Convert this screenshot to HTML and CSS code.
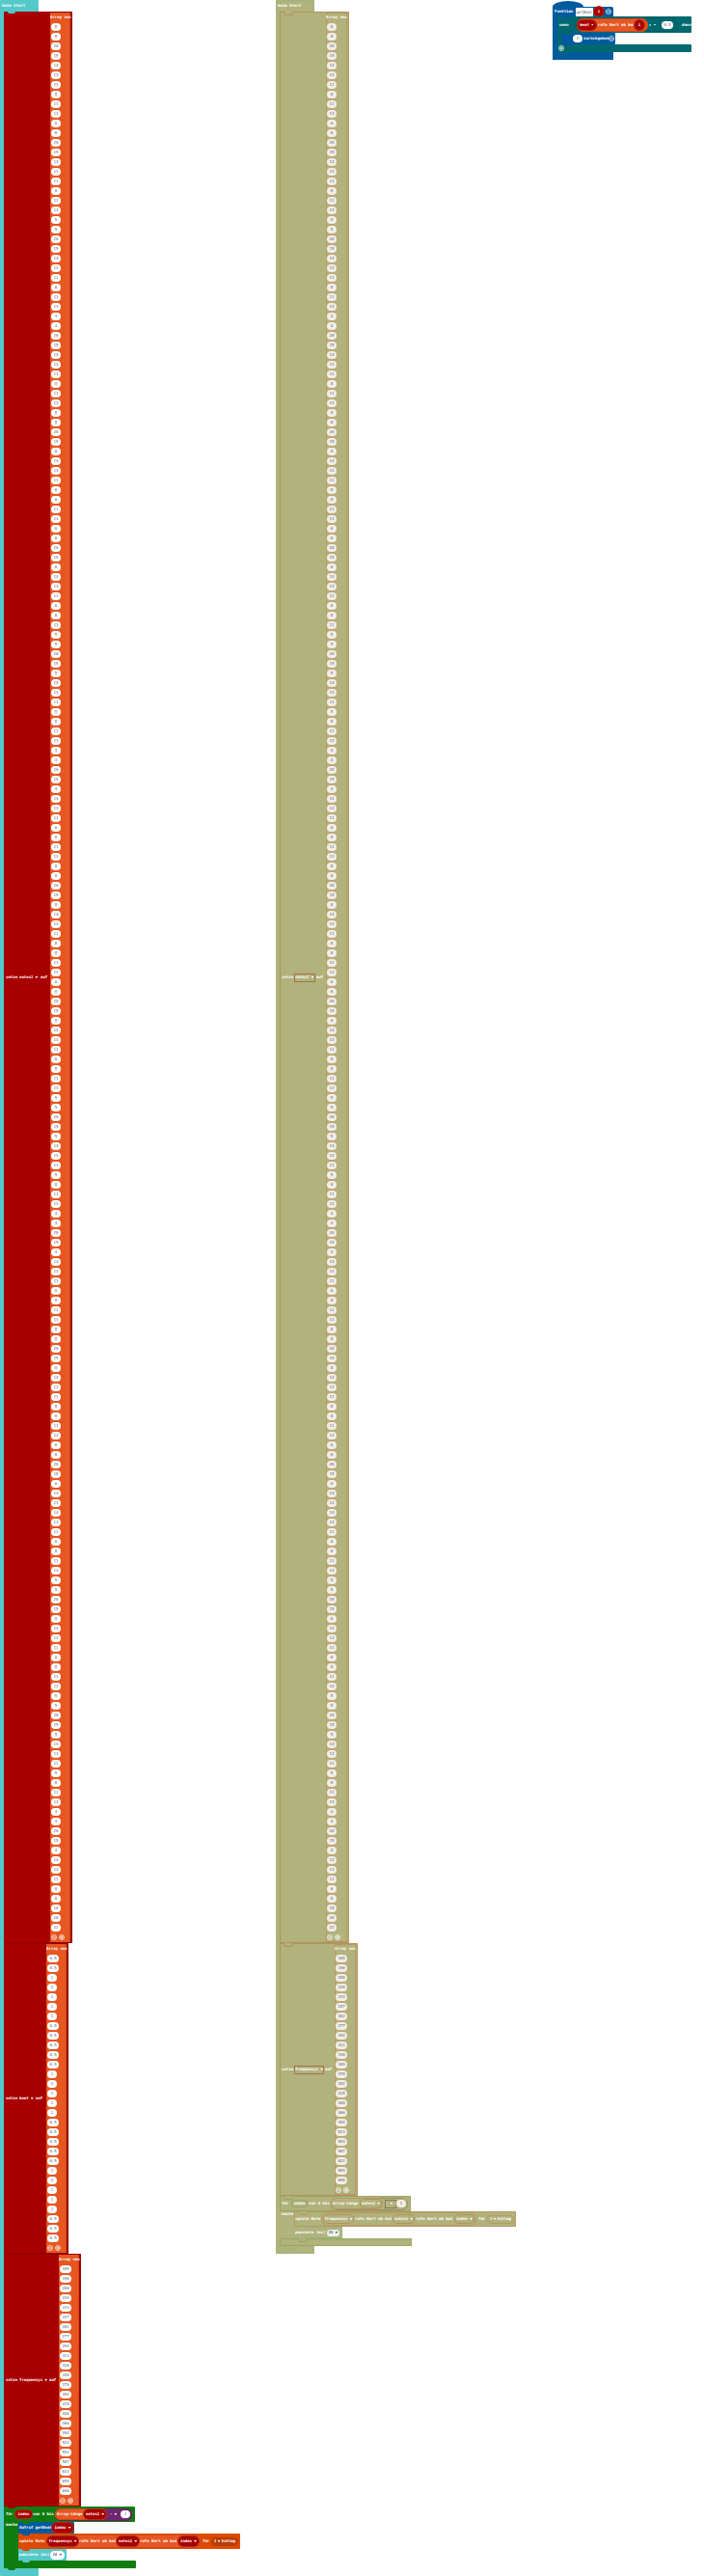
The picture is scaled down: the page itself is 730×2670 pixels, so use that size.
FILE: index.html
```html
<!DOCTYPE html>
<html lang="de">
<head>
<meta charset="utf-8">
<title>Blöcke</title>
<link rel="stylesheet" href="styles.css">
</head>
<body>
<svg class="defs" aria-hidden="true">
  <symbol id="minus" viewBox="0 0 12 12"><circle cx="6" cy="6" r="5" fill="none" stroke="currentColor" stroke-width="1.5"/><path d="M3 6h6" stroke="currentColor" stroke-width="2"/></symbol>
  <symbol id="plus" viewBox="0 0 12 12"><circle cx="6" cy="6" r="5" fill="none" stroke="currentColor" stroke-width="1.5"/><path d="M3 6h6M6 3v6" stroke="currentColor" stroke-width="2"/></symbol>
</svg>
<main class="workspace">

  <section class="stack">
    <h2 class="hat teal">beim Start</h2>
    <div class="body teal">
      <div class="block set notes red after-teal">
        <span>setze</span>
        <label class="drop flat"><select aria-label="Variable"><option>notes1</option></select></label>
        <span>auf</span>
        <div class="array orange" data-values="notes"></div>
      </div>
      <div class="block set beat red">
        <span>setze</span>
        <label class="drop flat"><select aria-label="Variable"><option>beat</option></select></label>
        <span>auf</span>
        <div class="array orange" data-values="beat"></div>
      </div>
      <div class="block set freq red">
        <span>setze</span>
        <label class="drop flat"><select aria-label="Variable"><option>frequensys</option></select></label>
        <span>auf</span>
        <div class="array orange" data-values="freq"></div>
      </div>
      <div class="loop green">
        <div class="block loop-head green after-red">
          <span>für</span><span class="pill red">index</span><span>von 0 bis</span>
          <div class="oval minus purple">
            <div class="oval length orange"><span>Array-Länge</span><label class="drop red"><select aria-label="Array"><option>notes1</option></select></label></div>
            <label class="drop flat"><select aria-label="Rechenart"><option>-</option></select></label>
            <input class="value" value="1" aria-label="Zahl">
          </div>
        </div>
        <div class="loop-body">
          <span class="do">mache</span>
          <div class="inner">
            <div class="block call blue after-green"><span>Aufruf getBeat</span><label class="drop red"><select aria-label="Argument"><option>index</option></select></label></div>
            <div class="block play rust after-blue">
              <span>spiele Note</span>
              <div class="oval lookup orange">
                <label class="drop red"><select aria-label="Liste"><option>frequensys</option></select></label>
                <span>rufe Wert ab bei</span>
                <label class="drop red"><select aria-label="Liste"><option>notes1</option></select></label>
                <span>rufe Wert ab bei</span>
                <label class="drop red"><select aria-label="Index"><option>index</option></select></label>
              </div>
              <span>für</span>
              <label class="drop beats"><select aria-label="Dauer"><option>1</option></select><span>Schlag</span></label>
            </div>
            <div class="block pause teal after-rust"><span>pausiere (ms)</span><label class="drop light"><select aria-label="Dauer in ms"><option>20</option></select></label></div>
          </div>
        </div>
        <div class="block loop-foot green after-teal-inner"></div>
      </div>
    </div>
    <div class="foot teal after-green"></div>
  </section>

  <section class="stack off">
    <h2 class="hat teal">beim Start</h2>
    <div class="body teal">
      <div class="block set notes red after-teal">
        <span>setze</span>
        <label class="drop flat"><select aria-label="Variable"><option>notes1</option></select></label>
        <span>auf</span>
        <div class="array orange" data-values="notes"></div>
      </div>
      <div class="block set freq red after-red">
        <span>setze</span>
        <label class="drop flat"><select aria-label="Variable"><option>frequensys</option></select></label>
        <span>auf</span>
        <div class="array orange" data-values="freq"></div>
      </div>
      <div class="loop green">
        <div class="block loop-head green after-red">
          <span>für</span><span class="pill green">index</span><span>von 0 bis</span>
          <div class="oval minus purple">
            <div class="oval length orange"><span>Array-Länge</span><label class="drop red"><select aria-label="Array"><option>notes1</option></select></label></div>
            <label class="drop flat"><select aria-label="Rechenart"><option>-</option></select></label>
            <input class="value" value="1" aria-label="Zahl">
          </div>
        </div>
        <div class="loop-body">
          <span class="do">mache</span>
          <div class="inner">
            <div class="block play rust after-green">
              <span>spiele Note</span>
              <div class="oval lookup orange">
                <label class="drop red"><select aria-label="Liste"><option>frequensys</option></select></label>
                <span>rufe Wert ab bei</span>
                <label class="drop red"><select aria-label="Liste"><option>notes1</option></select></label>
                <span>rufe Wert ab bei</span>
                <label class="drop red"><select aria-label="Index"><option>index</option></select></label>
              </div>
              <span>für</span>
              <label class="drop beats"><select aria-label="Dauer"><option>1</option></select><span>Schlag</span></label>
            </div>
            <div class="block pause teal after-rust"><span>pausiere (ms)</span><label class="drop light"><select aria-label="Dauer in ms"><option>20</option></select></label></div>
          </div>
        </div>
        <div class="block loop-foot green after-teal-inner"></div>
      </div>
    </div>
    <div class="foot teal after-green"></div>
  </section>

  <section class="stack func">
    <div class="cap blue"></div>
    <div class="block func-head blue">
      <span>Funktion</span><input class="name" value="getBeat" aria-label="Funktionsname"><span class="pill red">i</span>
      <button class="icon" aria-label="Einklappen"><svg><use href="#minus"/></svg></button>
    </div>
    <div class="body blue">
      <div class="block if-head pine after-blue">
        <span>wenn</span>
        <div class="oval compare pine">
          <div class="oval pick orange">
            <label class="drop red"><select aria-label="Liste"><option>beat</option></select></label>
            <span>rufe Wert ab bei</span><span class="pill red">i</span>
          </div>
          <label class="drop flat"><select aria-label="Vergleich"><option>=</option></select></label>
          <input class="value wide" value="0.5" aria-label="Zahl">
        </div>
        <span>dann</span>
      </div>
      <div class="if-body pine">
        <div class="block return blue after-pine">
          <input class="value" value="2" aria-label="Rückgabewert"><span>zurückgeben</span>
          <button class="icon" aria-label="Wert entfernen"><svg><use href="#minus"/></svg></button>
        </div>
      </div>
      <div class="block if-foot pine after-blue-inner">
        <button class="icon" aria-label="Zweig hinzufügen"><svg><use href="#plus"/></svg></button>
      </div>
    </div>
    <div class="func-foot blue after-pine"></div>
  </section>

</main>
<script src="arrays.js"></script>
</body>
</html>
```

FILE: styles.css
```css
* { box-sizing: border-box; }

body {
  margin: 0;
  background: #fff;
  color: #fff;
  font: bold 4px/6px "DejaVu Sans Mono", monospace;
}

.defs { position: absolute; width: 0; height: 0; }

.workspace {
  display: grid;
  grid-template-columns: 286fr 287fr 157fr;
  align-items: start;
}

.stack { min-width: 0; white-space: nowrap; }

/* block colours */
.teal { --c: #54c9c9; --line: #4dbcbc; }
.red { --c: #a80000; --line: #960000; }
.orange { --c: #e65722; --line: #cf4a1a; }
.green { --c: #107c10; --line: #0e720e; }
.purple { --c: #712672; --line: #64215f; }
.blue { --c: #005a9e; --line: #00528f; }
.rust { --c: #dd4900; --line: #cc4300; }
.pine { --c: #006970; --line: #005c62; }

.after-teal, .after-teal-inner { --prev: #54c9c9; }
.after-red { --prev: #a80000; }
.after-green { --prev: #107c10; }
.after-blue, .after-blue-inner { --prev: #005a9e; }
.after-rust { --prev: #dd4900; }
.after-pine { --prev: #006970; }

.off .teal { --c: #b1b27c; --line: #9db481; }
.off .red { --c: #b1b27c; --line: #b3925f; }
.off .orange { --c: #b1b27c; --line: #b89a62; }
.off .green { --c: #b1b27c; --line: #94a862; }
.off .purple { --c: #b1b27c; --line: #9c8d70; }
.off .rust { --c: #b1b27c; --line: #b89a62; }

/* frame of a stack */
.hat {
  width: 40px;
  height: 12px;
  margin: 0;
  padding: 3px 2px;
  font: inherit;
  background: var(--c);
  border-radius: 1px 1px 0 0;
}
.body { width: max-content; border-left: 4px solid var(--c); }
.foot {
  position: relative;
  width: 40px;
  height: 8px;
  background: var(--c);
  border-radius: 0 0 1px 1px;
}
.off .hat { box-shadow: inset 0 1px var(--line), inset 1px 0 var(--line), inset -1px 0 var(--line); }
.off .foot { box-shadow: inset 1px 0 var(--line), inset 0 -1px var(--line), inset -1px 0 var(--line); }

.block {
  position: relative;
  display: grid;
  align-items: center;
  width: max-content;
  background: var(--c);
  border-radius: 0 1px 1px 0;
}
.block.set, .off .block { box-shadow: inset 0 0 0 1px var(--line); }

/* connector between two stacked blocks */
.block::before, .foot::before, .func-foot::before {
  content: "";
  position: absolute;
  top: 0;
  left: 4px;
  width: 8px;
  height: 2px;
  background: var(--prev, transparent);
  border-radius: 0 0 3px 3px;
}
.foot::before, .func-foot::before { left: 8px; }
.loop-foot::before { left: 19px; }
.if-foot::before { left: 8px; }
.off .block::before, .off .foot::before {
  height: 3px;
  background: #b1b27c;
  border: solid var(--line);
  border-width: 0 1px 1px;
}

/* "setze … auf" blocks */
.set { padding: 1px 2px 1px 2px; }
.notes { grid-template-columns: 13px 22px 11px 21px; }
.beat { grid-template-columns: 13px 17px 12px 21px; }
.freq { grid-template-columns: 13px 31px 11px 21px; }
.off .notes { grid-template-columns: 13px 22px 11px 22px; }
.off .freq { grid-template-columns: 13px 31px 11px 22px; }
.set > span:nth-of-type(2) { padding-left: 1px; }

.array { background: var(--c); box-shadow: inset -1px 0 var(--line); }
.off .array { box-shadow: inset 0 0 0 1px var(--line); }
.array-title { height: 10px; line-height: 10px; }
.array ol { margin: 0; padding: 0; list-style: none; }
.array li, .array-tools { display: flex; align-items: center; height: 10px; padding-left: 1px; }
.array-tools { gap: 2px; }

.value, .name {
  width: 10px;
  height: 8px;
  padding: 0;
  border: 0;
  border-radius: 4px;
  background: #fff;
  color: #575e75;
  font: 4px/8px "DejaVu Sans Mono", monospace;
  text-align: center;
}
.value.wide { width: 12px; }
.name { width: 18px; height: 9px; border-radius: 0; }
.off .value { background: #f0efe4; box-shadow: 0 0 0 1px #c0a77a; }

.icon {
  width: 6px;
  height: 6px;
  padding: 0;
  border: 0;
  background: none;
  color: #fff;
}
.icon svg { display: block; width: 6px; height: 6px; }

/* drop-downs and variable pills */
.drop, .pill {
  display: flex;
  align-items: center;
  justify-content: center;
  gap: 2px;
  height: 10px;
  border-radius: 5px;
  background: var(--c);
}
.drop::after {
  content: "";
  flex: none;
  order: 1;
  width: 3px;
  height: 2px;
  background: currentColor;
  clip-path: polygon(0 0, 100% 0, 50% 100%);
}
.drop > span { order: 2; }
.drop select {
  appearance: none;
  field-sizing: content;
  margin: 0;
  padding: 0;
  border: 0;
  background: none;
  color: inherit;
  font: inherit;
}
.flat { justify-content: start; padding-left: 1px; background: none; border-radius: 0; }
.drop.red, .pill.red { box-shadow: 0 0 0 1px #b52a10; }
.light { height: 9px; background: #fff; color: #575e75; }
.beats { height: 9px; gap: 1px; background: #b83d05; }
.off .drop, .off .pill { background: #b1b27c; box-shadow: inset 0 0 0 1px var(--line); }
.off .flat { height: 9px; box-shadow: inset 0 0 0 1px #a5734a; }
.off .minus .flat { box-shadow: inset 0 0 0 1px #8a7858; }
.off .light { background: #eef1e8; }

.oval {
  display: grid;
  align-items: center;
  border-radius: 8px;
  background: var(--c);
  box-shadow: inset 0 0 0 1px var(--line);
}

/* counting loop */
.loop { width: max-content; }
.loop-head {
  grid-template-columns: 10px 17px 24px 80px;
  height: 16px;
  padding: 0 3px 0 2px;
}
.loop-head > span:nth-of-type(3) { padding-left: 1px; }
.loop-head > .pill { height: 8px; }
.minus { grid-template-columns: 54px 14px 11px; height: 13px; }
.minus > .flat { margin-left: 2px; }
.length { grid-template-columns: 28px 23px; height: 12px; padding-left: 2px; }
.loop-body {
  display: grid;
  grid-template-columns: 15px max-content;
  background: linear-gradient(90deg, var(--c) 15px, transparent 15px);
}
.do { padding-left: 2px; }
.loop-foot { width: 137px; height: 8px; }

.call { grid-template-columns: 34px 22px; height: 12px; padding: 0 1px 0 1px; }
.play {
  grid-template-columns: 27px 161px 11px 28px;
  height: 16px;
  padding: 0 2px 0 1px;
}
.lookup { grid-template-columns: 32px 40px 23px 41px 21px; height: 14px; padding-left: 2px; }
.lookup > span { padding-left: 1px; }
.play > span:nth-of-type(2) { padding-left: 2px; }
.pause { grid-template-columns: 32px 15px; height: 12px; padding: 0 2px 0 1px; }

/* function definition */
.cap { width: 32px; height: 6px; margin-top: 1px; background: var(--c); border-radius: 50% 50% 0 0 / 100% 100% 0 0; }
.func-head {
  grid-template-columns: 20px 21px 12px 6px;
  height: 10px;
  padding: 0 2px;
  border-radius: 0 2px 0 0;
}
.func-head > .name { margin-left: 2px; }
.func-head > .pill, .pick > .pill { width: 10px; }
.func .body { border-left-width: 5px; }
.if-head { grid-template-columns: 16px 106px 14px; height: 17px; padding: 0 1px 0 2px; }
.compare { grid-template-columns: 74px 14px 14px; height: 15px; padding-left: 2px; }
.pick { grid-template-columns: 19px 40px 10px; height: 14px; padding-left: 1px; }
.pick > span:not(.pill) { padding-left: 2px; }
.if-head > span:last-child { padding-left: 5px; }
.if-body { border-left: 4px solid var(--c); }
.return { grid-template-columns: 11px 26px 6px; height: 12px; padding: 0 1px 0 12px; }
.if-foot { width: 100%; height: 8px; padding-left: 1px; }
.func-foot { position: relative; width: 63px; height: 8px; background: var(--c); }
```

FILE: arrays.js
```js
const cycle = (a, b) => [a, a, 20, 15, a, 14, 13, 11, b, 8, 11, 13];
const intro = a => [a, a, 20, 15, 14, 13, 11, 8, 11, 13];

const data = {
  notes: [
    ...intro(8), ...intro(6), ...intro(5), ...intro(4),
    ...cycle(8, 8),
    6, 6, 20, 15, 6, 14, 13, 11, 6, 8, 11,
    ...cycle(5, 5), ...cycle(4, 6), ...cycle(8, 8), ...cycle(6, 6),
    ...cycle(5, 5), ...cycle(4, 6), ...cycle(8, 8),
    6, 6, 20, 15, 6, 14, 13, 14, 13, 11, 6, 8, 11, 13,
    5, 5, 20, 15, 6, 14, 13, 11, 6, 8, 11, 13,
    ...cycle(5, 5),
    4, 4, 20, 15, 4, 14, 13, 11, 6, 8, 18, 20, 22
  ],
  beat: [
    0.5, 0.5, 1, 2, 1, 1, 1, 0.5, 0.5, 0.5, 0.5, 0.5, 1, 2, 1,
    1, 1, 0.5, 0.5, 0.5, 0.5, 0.5, 1, 2, 1, 1, 1, 0.5, 0.5, 0.5
  ],
  freq: [
    185, 196, 208, 220, 233, 247, 262, 277, 294, 311, 330, 349,
    370, 392, 415, 440, 466, 494, 523, 554, 587, 622, 659, 698
  ]
};

for (const box of document.querySelectorAll(".array")) {
  const rows = data[box.dataset.values].map((v, i) =>
    `<li><input class="value${String(v).length > 2 ? " wide" : ""}" value="${v}" aria-label="Wert ${i + 1}"></li>`
  ).join("");
  box.innerHTML = `<div class="array-title">Array von</div><ol>${rows}</ol>
    <div class="array-tools">
      <button class="icon" aria-label="Wert entfernen"><svg><use href="#minus"/></svg></button>
      <button class="icon" aria-label="Wert hinzufügen"><svg><use href="#plus"/></svg></button>
    </div>`;
}
```
